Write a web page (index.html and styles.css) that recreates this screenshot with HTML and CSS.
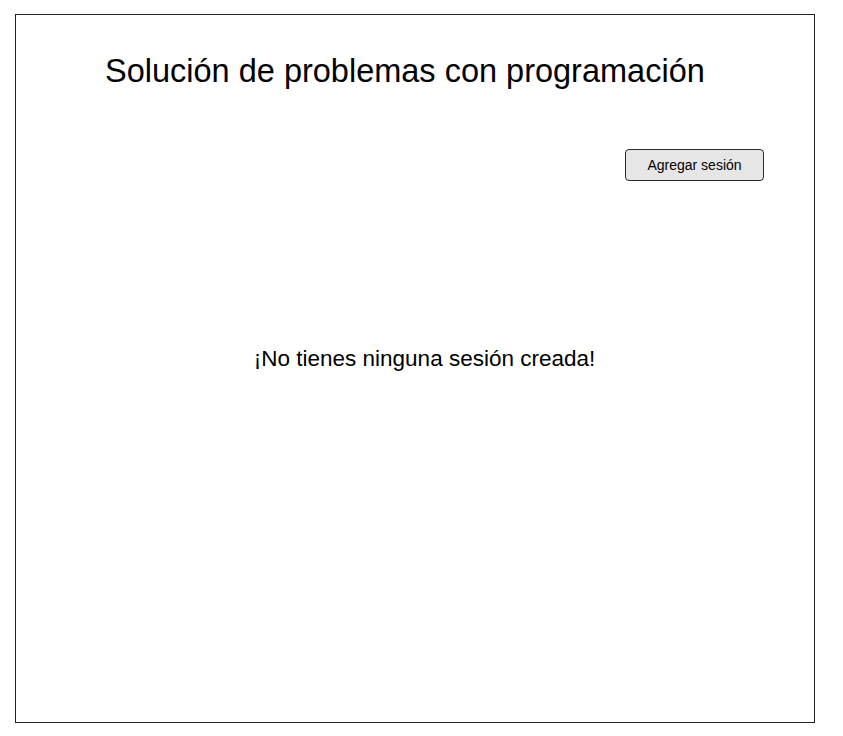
FILE: index.html
```html
<!DOCTYPE html>
<html lang="es">
<head>
<meta charset="utf-8">
<title>Sesiones</title>
<link rel="stylesheet" href="styles.css">
</head>
<body>
<main class="frame">
  <h1 class="title">Solución de problemas con programación</h1>
  <div class="actions">
    <button class="add-btn" type="button">Agregar sesión</button>
  </div>
  <p class="empty">¡No tienes ninguna sesión creada!</p>
</main>
</body>
</html>
```
FILE: styles.css
```css
html, body {
  margin: 0;
  padding: 0;
  background: #ffffff;
}
body {
  font-family: "Liberation Sans", Arial, sans-serif;
  color: #000;
}
.frame {
  box-sizing: border-box;
  margin: 14px 0 0 15px;
  width: 800px;
  height: 709px;
  border: 1px solid #222;
  display: flex;
  flex-direction: column;
  padding-top: 38px;
}
.title {
  margin: 0;
  padding-left: 89px;
  font-size: 32.5px;
  font-weight: normal;
  line-height: 37px;
}
.actions {
  display: flex;
  justify-content: flex-end;
  margin-top: 59px;
  padding-right: 50px;
}
.add-btn {
  box-sizing: border-box;
  width: 139px;
  height: 32px;
  border: 1px solid #2a2a2a;
  border-radius: 4px;
  background: #e6e6e6;
  font-family: "Liberation Sans", Arial, sans-serif;
  font-size: 14px;
  color: #000;
  padding: 0;
}
.empty {
  margin: 165px 0 0 0;
  padding-left: 19px;
  text-align: center;
  font-size: 22.5px;
  line-height: 25px;
}
```
